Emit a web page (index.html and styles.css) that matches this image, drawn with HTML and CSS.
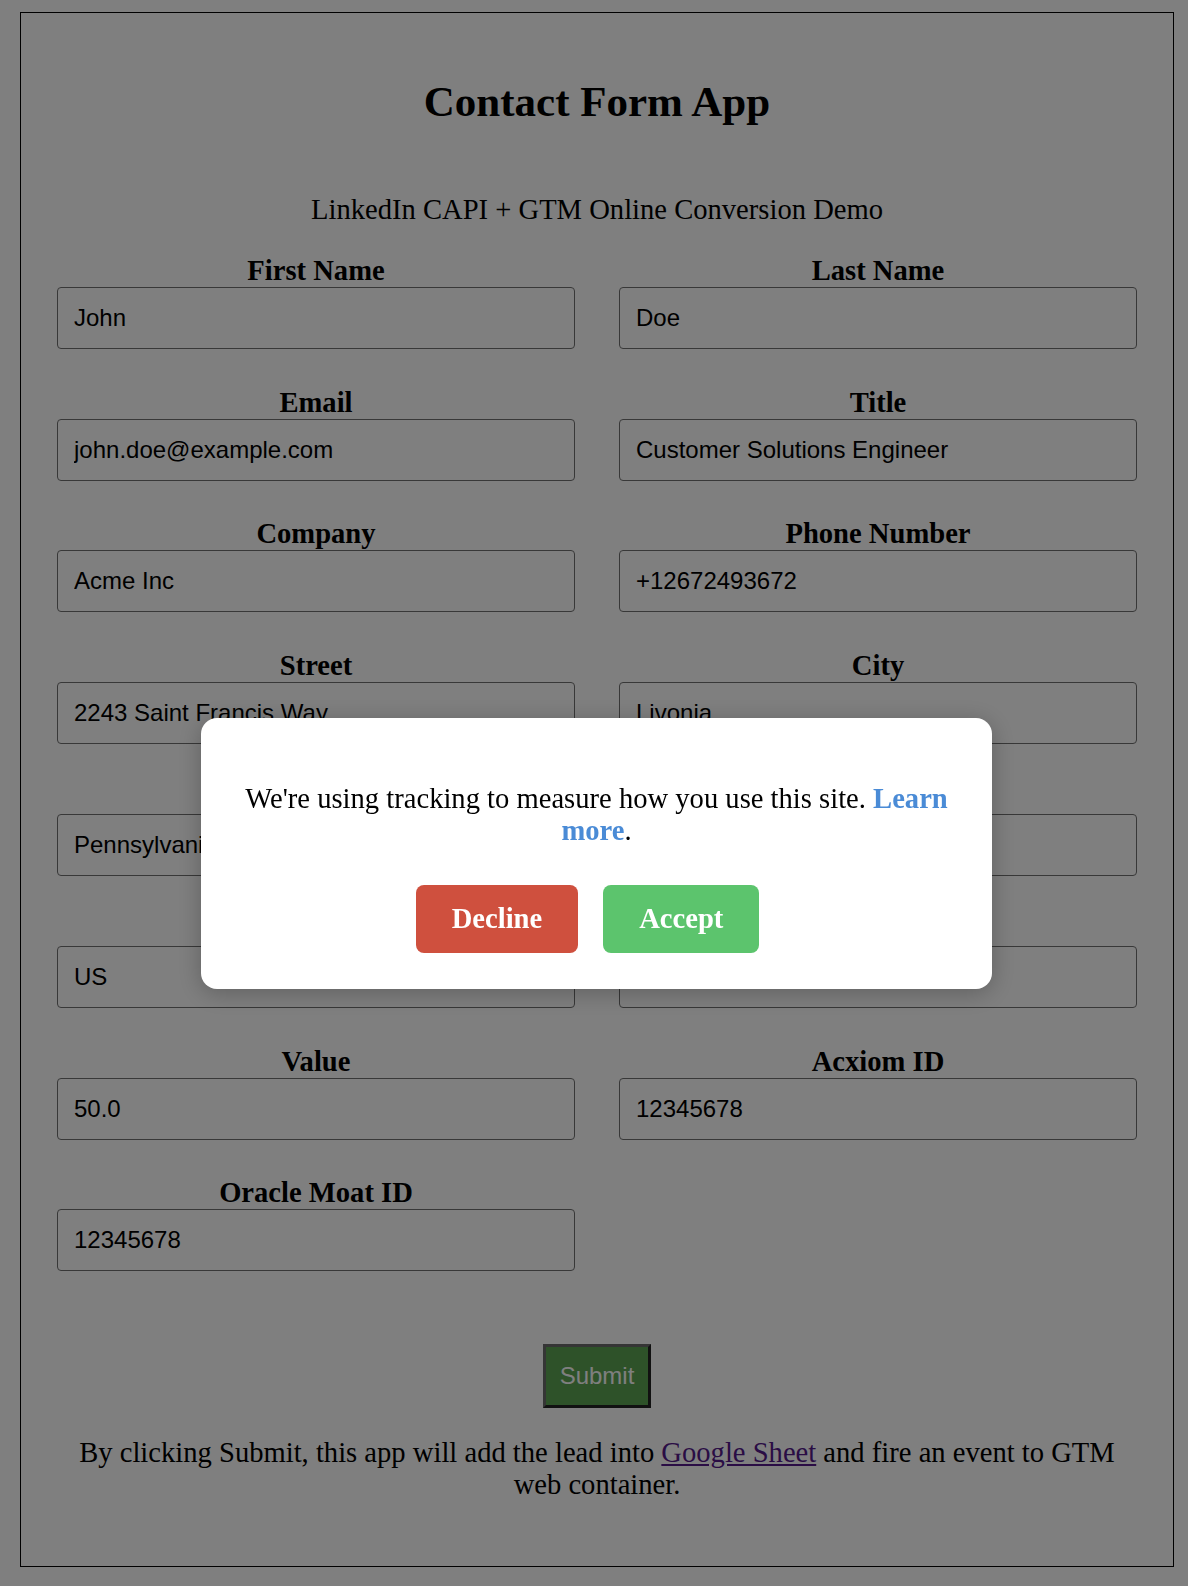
FILE: index.html
```html
<!DOCTYPE html>
<html lang="en">
<head>
<meta charset="utf-8">
<title>Contact Form App</title>
<link rel="stylesheet" href="styles.css">
</head>
<body>
<div class="page">
  <h1 class="title">Contact Form App</h1>
  <p class="subtitle">LinkedIn CAPI + GTM Online Conversion Demo</p>
  <form class="form">
    <div class="grid">
      <div class="field"><label class="label">First Name</label><input class="input" type="text" value="John"></div>
      <div class="field"><label class="label">Last Name</label><input class="input" type="text" value="Doe"></div>
      <div class="field"><label class="label">Email</label><input class="input" type="text" value="john.doe@example.com"></div>
      <div class="field"><label class="label">Title</label><input class="input" type="text" value="Customer Solutions Engineer"></div>
      <div class="field"><label class="label">Company</label><input class="input" type="text" value="Acme Inc"></div>
      <div class="field"><label class="label">Phone Number</label><input class="input" type="text" value="+12672493672"></div>
      <div class="field"><label class="label">Street</label><input class="input" type="text" value="2243 Saint Francis Way"></div>
      <div class="field"><label class="label">City</label><input class="input" type="text" value="Livonia"></div>
      <div class="field"><label class="label">State</label><input class="input" type="text" value="Pennsylvania"></div>
      <div class="field"><label class="label">Zip Code</label><input class="input" type="text" value="48152"></div>
      <div class="field"><label class="label">Country</label><input class="input" type="text" value="US"></div>
      <div class="field"><label class="label">Currency</label><input class="input" type="text" value="USD"></div>
      <div class="field"><label class="label">Value</label><input class="input" type="text" value="50.0"></div>
      <div class="field"><label class="label">Acxiom ID</label><input class="input" type="text" value="12345678"></div>
      <div class="field"><label class="label">Oracle Moat ID</label><input class="input" type="text" value="12345678"></div>
    </div>
    <div class="submit-row"><button class="submit" type="button">Submit</button></div>
  </form>
  <p class="note">By clicking Submit, this app will add the lead into <a class="sheet-link" href="#">Google Sheet</a> and fire an event to GTM web container.</p>
</div>

<div class="overlay"></div>
<div class="modal">
  <p class="modal-text">We're using tracking to measure how you use this site. <a class="learn" href="#">Learn more</a>.</p>
  <div class="actions">
    <button class="btn btn-decline" type="button">Decline</button>
    <button class="btn btn-accept" type="button">Accept</button>
  </div>
</div>
</body>
</html>
```

FILE: styles.css
```css
html, body {
  margin: 0;
  padding: 0;
  background: #ffffff;
}

body {
  font-family: "Liberation Serif", "Times New Roman", serif;
  font-size: 28.6px;
  color: #000;
}

.page {
  box-sizing: border-box;
  width: 1154px;
  margin: 12px 0 0 20px;
  padding: 36px;
  border: 1px solid #000;
}

.title {
  font-size: 43px;
  font-weight: bold;
  text-align: center;
  margin: 28px 0 67.5px;
}

.subtitle {
  text-align: center;
  margin: 0 0 29.4px;
}

.form {
  margin: 0;
}

.grid {
  display: grid;
  grid-template-columns: 1fr 1fr;
  column-gap: 44px;
  row-gap: 37.8px;
}

.field {
  display: flex;
  flex-direction: column;
}

.label {
  display: block;
  text-align: center;
  font-weight: bold;
}

.input {
  box-sizing: border-box;
  width: 100%;
  height: 62px;
  margin: 0;
  padding: 0 16px;
  font-family: "Liberation Sans", Arial, sans-serif;
  font-size: 24px;
  color: #000;
  background: #fff;
  border: 1px solid #707070;
  border-radius: 4px;
}

.submit-row {
  display: flex;
  justify-content: center;
  margin-top: 72.3px;
}

.submit {
  font-family: "Liberation Sans", Arial, sans-serif;
  font-size: 24px;
  color: #fff;
  background: #5ca453;
  padding: 15px 13.5px;
  border-style: solid;
  border-width: 3px;
  border-color: #6a6a6a #222 #222 #6a6a6a;
  border-radius: 0;
}

.note {
  text-align: center;
  margin: 29.5px 0 28.6px;
}

.sheet-link {
  color: #551a8b;
  text-decoration: underline;
}

.overlay {
  position: fixed;
  inset: 0;
  background: rgba(0, 0, 0, 0.5);
}

.modal {
  position: fixed;
  top: 718px;
  left: 201px;
  width: 791px;
  box-sizing: border-box;
  padding: 36px;
  background: #fff;
  border-radius: 16px;
  box-shadow: 0 4px 24px rgba(0, 0, 0, 0.25);
  text-align: center;
}

.modal-text {
  margin: 28.6px 0 0;
}

.learn {
  color: #4a8bd6;
  font-weight: bold;
  text-decoration: none;
}

.actions {
  display: flex;
  justify-content: center;
  gap: 25px;
  margin-top: 38.6px;
  padding-right: 18px;
}

.btn {
  font-family: "Liberation Serif", "Times New Roman", serif;
  font-size: 28.6px;
  font-weight: bold;
  color: #fff;
  border: none;
  border-radius: 8px;
  padding: 18px 36px;
  line-height: normal;
}

.btn-decline {
  background: #cf503e;
}

.btn-accept {
  background: #5cc46d;
}
```
